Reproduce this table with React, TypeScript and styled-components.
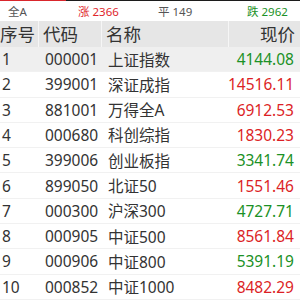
import React from "react";
import styled, { createGlobalStyle } from "styled-components";

const Global = createGlobalStyle`
  html, body { margin: 0; padding: 0; background: #fff; }
  body { width: 300px; height: 300px; overflow: hidden; font-family: "Noto Sans", "Noto Sans CJK SC", sans-serif; }
`;

const Page = styled.div`
  width: 300px;
  height: 300px;
  display: flex;
  flex-direction: column;
  background: #fff;
  color: #333;
`;

const Progress = styled.div`
  height: 1px;
  display: flex;
  background: #1c1c1c;
`;

const ProgressFill = styled.div`
  background: #d9262c;
  height: 100%;
`;

const Stats = styled.div`
  height: 20px;
  display: grid;
  grid-template-columns: 78px 80px 89px 1fr;
  align-items: center;
  font-size: 11.5px;
`;

const Stat = styled.span<{ $color: string; $pad?: number }>`
  color: ${(p) => p.$color};
  padding-left: ${(p) => p.$pad ?? 0}px;
  white-space: nowrap;
`;

const cols = "38px 63px 127px 1fr";

const Header = styled.div`
  height: 26px;
  display: grid;
  grid-template-columns: ${cols};
  background: #e6e6e6;
  font-size: 17.5px;
  color: #333;
`;

const HeadCell = styled.div<{ $right?: boolean; $pad?: number }>`
  display: flex;
  align-items: center;
  justify-content: ${(p) => (p.$right ? "flex-end" : "flex-start")};
  padding-left: ${(p) => p.$pad ?? 4}px;
  padding-right: ${(p) => (p.$right ? 5 : 0)}px;
  border-left: ${(p) => (p.$pad === 0 ? "none" : "1.5px solid #f6f6f6")};
  white-space: nowrap;
`;

const Row = styled.div<{ $active?: boolean }>`
  height: 24.33px;
  display: grid;
  grid-template-columns: ${cols};
  align-items: center;
  font-size: 15.5px;
  background: ${(p) => (p.$active ? "#efefef" : "#fff")};
  border-bottom: 1px solid #f1f1f1;
`;

const Cell = styled.div<{ $pad?: number }>`
  padding-left: ${(p) => p.$pad ?? 0}px;
  white-space: nowrap;
`;

const Price = styled.div<{ $up: boolean }>`
  text-align: right;
  padding-right: 6px;
  color: ${(p) => (p.$up ? "#dc1f26" : "#1b9126")};
`;

const data: [string, string, string, boolean][] = [
  ["000001", "上证指数", "4144.08", false],
  ["399001", "深证成指", "14516.11", true],
  ["881001", "万得全A", "6912.53", true],
  ["000680", "科创综指", "1830.23", true],
  ["399006", "创业板指", "3341.74", false],
  ["899050", "北证50", "1551.46", true],
  ["000300", "沪深300", "4727.71", false],
  ["000905", "中证500", "8561.84", true],
  ["000906", "中证800", "5391.19", false],
  ["000852", "中证1000", "8482.29", true],
];

export default function App() {
  return (
    <Page>
      <Global />
      <Progress>
        <ProgressFill style={{ width: "66px" }} />
      </Progress>
      <Stats>
        <Stat $color="#555" $pad={8}>全A</Stat>
        <Stat $color="#e0262c">涨 2366</Stat>
        <Stat $color="#555">平 149</Stat>
        <Stat $color="#1b9126">跌 2962</Stat>
      </Stats>
      <Header>
        <HeadCell $pad={0}>序号</HeadCell>
        <HeadCell>代码</HeadCell>
        <HeadCell>名称</HeadCell>
        <HeadCell $right>现价</HeadCell>
      </Header>
      {data.map(([code, name, price, up], i) => (
        <Row key={code} $active={i === 0}>
          <Cell $pad={2}>{i + 1}</Cell>
          <Cell $pad={7}>{code}</Cell>
          <Cell $pad={7}>{name}</Cell>
          <Price $up={up}>{price}</Price>
        </Row>
      ))}
    </Page>
  );
}
